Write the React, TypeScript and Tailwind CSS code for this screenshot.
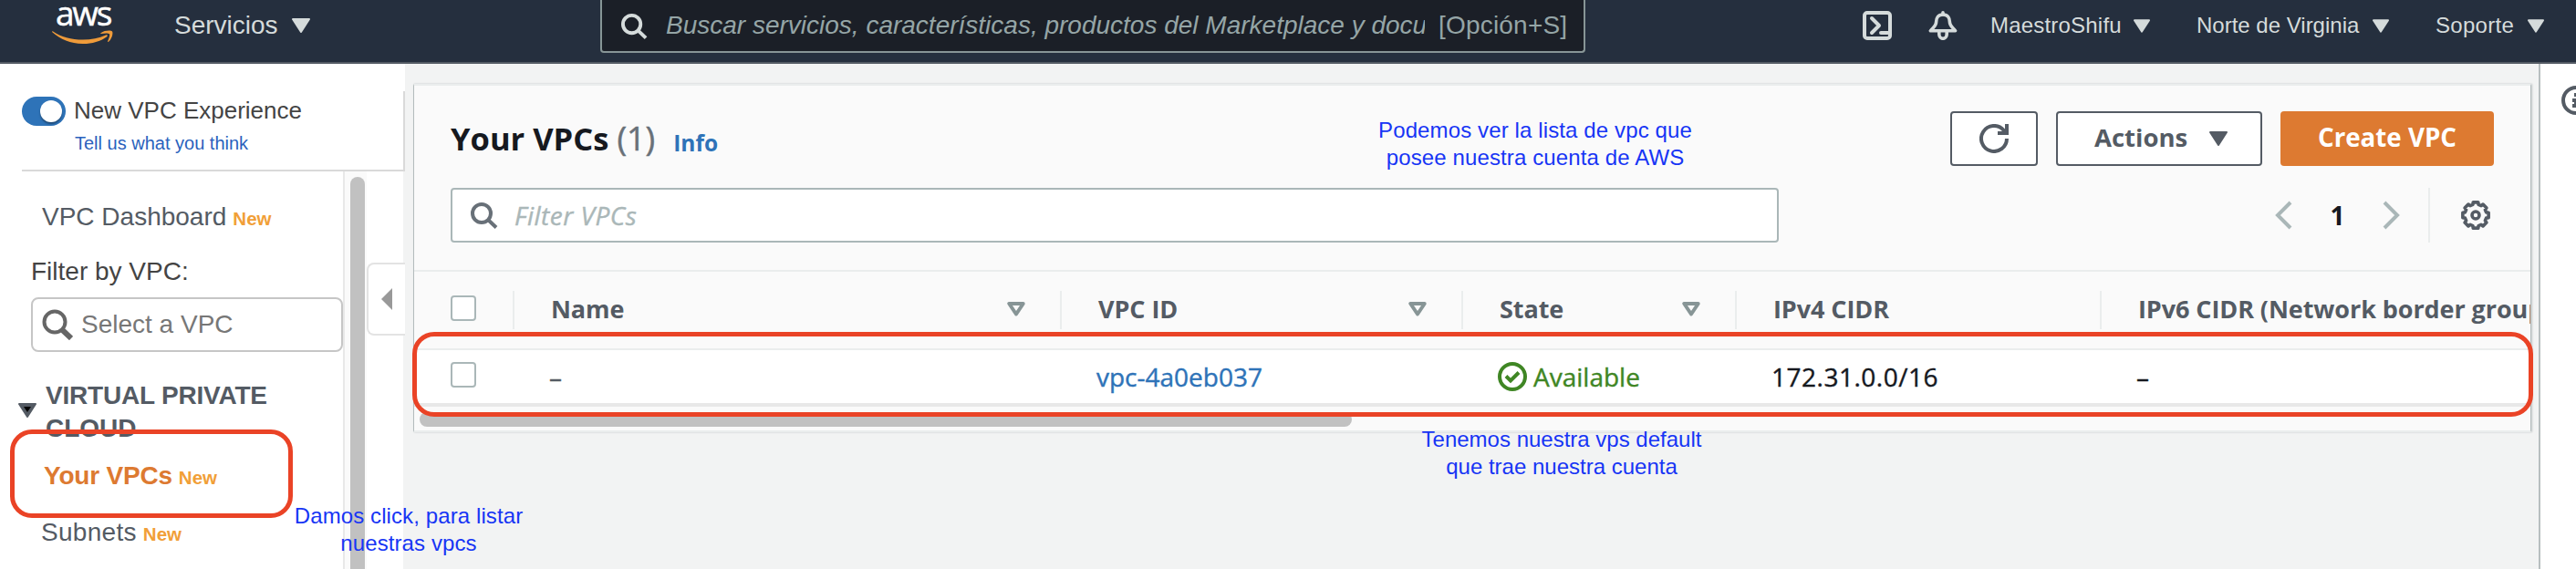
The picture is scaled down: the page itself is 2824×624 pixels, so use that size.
import React from "react";

const ember = "font-['Open_Sans','Noto_Sans',sans-serif]";

function Caret({ className = "" }: { className?: string }) {
  return (
    <svg viewBox="0 0 20 16" className={className} fill="currentColor" stroke="currentColor" strokeWidth="2" strokeLinejoin="round">
      <path d="M1 1H19L10 15Z" />
    </svg>
  );
}

function SearchIcon({ className = "" }: { className?: string }) {
  return (
    <svg viewBox="0 0 32 30" className={className} fill="none" stroke="currentColor" strokeWidth="4">
      <circle cx="13" cy="13" r="10" />
      <path d="M19.5 19.5L29 28.5" />
    </svg>
  );
}

function AwsLogo() {
  return (
    <div className="flex h-[56px] w-[68px] flex-col items-center">
      <div className={`${ember} h-[33px] whitespace-nowrap text-[37px] leading-[28px] tracking-[-2.300px] text-white [-webkit-text-stroke:0.500px]`}>aws</div>
      <svg viewBox="0 0 68 16" className="h-[16px] w-[68px] shrink-0" fill="#ef9b3a">
        <path d="M0.8 1.2C10 7.5 21 10.6 34 10.6C43 10.600 51.500 8.800 59 5.400C60.500 4.800 61.400 6.200 60.200 7.200C53 12.500 43 15.200 33.500 15C20.500 15 9 10.300 0.300 2.300C-0.200 1.700 0.200 0.900 0.800 1.200Z" />
        <path d="M53.500 3.200C57.500 0.200 64.500 0 66 1.400C67.500 3.500 65 10.500 62 12.800C61.300 13.300 60.800 12.900 61.100 12.200C62.500 8.800 63.700 5.500 63 4.300C62 3 57.500 3.300 54 3.900C53.200 4 53 3.500 53.500 3.200Z" />
      </svg>
    </div>
  );
}

function Header() {
  return (
    <header className="flex h-[70px] shrink-0 items-start border-b-2 border-[#545b64] bg-[#252f3e] text-[#d5dbdb]">
      <div className="ml-[57px]">
        <AwsLogo />
      </div>
      <div className="ml-[66px] flex h-[56px] w-[149px] items-center justify-between text-[28px]">
        <span>Servicios</span>
        <Caret className="h-[16px] w-[20px]" />
      </div>
      <div className="ml-[318px] h-[58px] w-[1080px] rounded-b-[4px] border-x-2 border-b-2 border-[#879596] bg-[#1b1f27] text-[28px] text-[#95a5a6]">
        <div className="flex h-[56px] items-center">
          <SearchIcon className="ml-[20px] h-[29px] w-[31px] shrink-0 text-[#d5dbdb]" />
          <span className="ml-[19px] w-[832px] shrink-0 overflow-hidden whitespace-nowrap italic">
            Buscar servicios, características, productos del Marketplace y documentos
          </span>
          <span className="ml-[15px] whitespace-nowrap tracking-[0.2px]">[Opción+S]</span>
        </div>
      </div>
      <div className="ml-[304px] flex h-[56px] items-center text-[24px]">
        <svg viewBox="0 0 32 32" className="h-[32px] w-[32px]" fill="none" stroke="currentColor" strokeWidth="4" strokeLinecap="round" strokeLinejoin="round">
          <rect x="2" y="2" width="28" height="28" rx="3" />
          <path d="M10 8L18 16L10 24" />
          <path d="M20 24H28" />
        </svg>
        <svg viewBox="0 0 32 32" className="ml-[40px] h-[32px] w-[32px]" fill="none" stroke="currentColor" strokeWidth="3.600" strokeLinecap="round" strokeLinejoin="round">
          <path d="M16 1.800V4" />
          <path d="M16 4C10.500 4 8.600 8 8.600 12C8.600 16.500 5 18.500 2.400 21.800H29.600C27 18.500 23.400 16.500 23.400 12C23.400 8 21.500 4 16 4Z" />
          <path d="M11.800 23V25.500A4.200 4.800 0 0 0 20.200 25.500V23" />
        </svg>
        <span className="ml-[36px] w-[157px] whitespace-nowrap tracking-[0.2px]">MaestroShifu</span>
        <Caret className="h-[15px] w-[18px]" />
        <span className="ml-[51px] w-[193px] whitespace-nowrap">Norte de Virginia</span>
        <Caret className="h-[15px] w-[18px]" />
        <span className="ml-[51px] w-[101px] whitespace-nowrap tracking-[0.300px]">Soporte</span>
        <Caret className="h-[15px] w-[18px]" />
      </div>
    </header>
  );
}

function New() {
  return <span className="ml-[7px] text-[20.500px] font-bold text-[#f19f38]">New</span>;
}

function Sidebar() {
  return (
    <aside className="flex w-[444px] shrink-0 flex-col">
      <div className="bg-white pt-[30px]">
        <div className="h-[88px] border-r-2 border-[#d9d9d9] pl-[24px]">
          <div className="h-[88px] border-b-2 border-[#d9d9d9] pt-[6px]">
            <div className="flex h-[32px] items-center">
              <div className="flex h-[32px] w-[48px] items-center justify-end rounded-full bg-[#2e73b8] pr-[4px]">
                <div className="h-[24px] w-[24px] rounded-full bg-white shadow-[0_2px_2px_rgba(0,0,0,0.350)]" />
              </div>
              <span className="ml-[9px] pb-[2px] text-[26px] leading-[32px] text-[#444]">New VPC Experience</span>
            </div>
            <div className="mt-[4px] pl-[58px] text-[20px] leading-[30px] text-[#2a62bd]">Tell us what you think</div>
          </div>
        </div>
      </div>
      <div className="flex flex-1">
        <nav className="w-[378px] shrink-0 border-r-2 border-[#e8e8e8] bg-white pt-[30px] text-[28px] leading-[40px] whitespace-nowrap text-[#545b64]">
          <div className="h-[40px] pl-[46px]">VPC Dashboard<New /></div>
          <div className="mt-[20px] h-[40px] pl-[34px] text-[#444]">Filter by VPC:</div>
          <div className="mt-[8px] ml-[34px] flex h-[60px] w-[342px] items-center rounded-[8px] border-2 border-[#c6c6c6] pl-[10px] text-[#777]">
            <svg viewBox="0 0 34 34" className="h-[34px] w-[34px]" fill="none" stroke="#666">
              <circle cx="14" cy="14" r="11.500" strokeWidth="4" />
              <path d="M22 22.500L32 32" strokeWidth="6" />
            </svg>
            <span className="ml-[9px] pb-[1px]">Select a VPC</span>
          </div>
          <div className="mt-[30px] flex pl-[20px] leading-[36px] font-bold">
            <svg viewBox="0 0 20 16" className="mt-[26px] h-[16px] w-[20px]">
              <path d="M1 1H19L10 15Z" fill="#545b64" stroke="#545b64" strokeWidth="2" strokeLinejoin="round" />
              <path d="M6 4H14L10 10Z" fill="#000" />
            </svg>
            <div className="ml-[10px]">
              <div className="tracking-[-0.200px]">VIRTUAL PRIVATE</div>
              <div>CLOUD</div>
            </div>
          </div>
          <div className="mt-[14px] h-[40px] pl-[48px]">
            <span className="font-bold tracking-[-0.200px] text-[#dd7a31]">Your VPCs</span>
            <New />
          </div>
          <div className="mt-[22px] h-[40px] pl-[45px]">
            <span className="tracking-[0.300px]">Subnets</span>
            <New />
          </div>
        </nav>
        <div className="flex w-[24px] shrink-0 bg-[#fafafa] pt-[6px] pl-[6px]">
          <div className="w-[16px] rounded-t-full bg-[#c1c1c1]" />
        </div>
        <div className="w-[40px] shrink-0 bg-white pt-[100px]">
          <div className="flex h-[80px] w-[42px] items-center rounded-l-[8px] border-y-2 border-l-2 border-[#e3e3e3] bg-white pl-[14px]">
            <svg viewBox="0 0 12 24" className="h-[24px] w-[12px]" fill="#999">
              <path d="M12 0V24L0 12Z" />
            </svg>
          </div>
        </div>
      </div>
    </aside>
  );
}

function Gear() {
  const pts: string[] = [];
  for (let i = 0; i < 8; i++) {
    for (const [o, r] of [[-11, 14.4], [11, 14.4], [15, 12], [30, 12]]) {
      const a = ((i * 45 + o - 90) * Math.PI) / 180;
      pts.push(`${(16 + r * Math.cos(a)).toFixed(2)},${(16 + r * Math.sin(a)).toFixed(2)}`);
    }
  }
  return (
    <svg viewBox="0 0 32 32" className="h-[32px] w-[32px]" fill="none" stroke="#545b64" strokeWidth="3.600" strokeLinejoin="round">
      <polygon points={pts.join(" ")} />
      <circle cx="16" cy="16" r="4" />
    </svg>
  );
}

function Checkbox() {
  return <div className="mb-[4px] h-[28px] w-[28px] rounded-[4px] border-2 border-[#aab7b8] bg-white" />;
}

function HeadCell({ label, width, sort, last }: { label: string; width: string; sort?: boolean; last?: boolean }) {
  return (
    <div className={`flex h-[42px] shrink-0 items-center justify-between pr-[38px] pl-[40px] ${width} ${last ? "" : "border-r-2 border-[#eaeded]"}`}>
      <span className="pb-[2px] tracking-[-0.080px] whitespace-nowrap">{label}</span>
      {sort && (
        <svg viewBox="0 0 20 16" className="mb-[2px] h-[16px] w-[20px]" fill="none" stroke="#879596" strokeWidth="4" strokeLinejoin="round">
          <path d="M2.300 2H17.700L10 13.500Z" />
        </svg>
      )}
    </div>
  );
}

function Panel() {
  return (
    <section className={`${ember} mt-[22px] ml-[9px] h-[382px] w-[2322px] overflow-hidden border-x border-t-2 border-b-2 border-x-[#b4bcbd] border-y-[#eaeded] bg-[#fafafa] shadow-[1px_0_2px_rgba(0,28,36,0.200)]`}>
      <div className="mx-[40px] mt-[28px] flex h-[60px] items-center">
        <h2 className="text-[34.500px] font-bold whitespace-nowrap text-[#16191f]">Your VPCs</h2>
        <span className="ml-[9px] text-[36px] text-[#687078] [-webkit-text-stroke:0.500px]">(1)</span>
        <span className="mt-[10px] ml-[20px] text-[24.500px] font-bold text-[#2e73b8]">Info</span>
        <div className="ml-auto flex gap-[20px] text-[28px] font-bold">
          <button className="flex h-[60px] w-[96px] items-center justify-center rounded-[4px] border-2 border-[#545b64] bg-white">
            <svg viewBox="0 0 32 32" className="h-[32px] w-[32px]" fill="none" stroke="#545b64" strokeWidth="4">
              <path d="M30 16A14 14 0 1 1 26.500 6.700L29 9.500" />
              <path d="M30 0V10H20" />
            </svg>
          </button>
          <button className="flex h-[60px] w-[226px] items-center rounded-[4px] border-2 border-[#545b64] bg-white pl-[40px] text-[#545b64]">
            <span className="w-[126px] pb-[2px] text-left text-[27.500px]">Actions</span>
            <Caret className="h-[16px] w-[20px]" />
          </button>
          <button className="h-[60px] w-[234px] rounded-[4px] bg-[#dd7a31] pb-[2px] text-[27.700px] text-white">Create VPC</button>
        </div>
      </div>
      <div className="mx-[40px] mt-[24px] flex h-[60px] items-center">
        <div className="flex h-[60px] w-[1456px] items-center rounded-[4px] border-2 border-[#aab7b8] bg-white">
          <SearchIcon className="ml-[19px] h-[30px] w-[32px] text-[#687078]" />
          <span className="ml-[17px] text-[28px] tracking-[0.500px] text-[#aab7b8] italic [-webkit-text-stroke:0.400px]">Filter VPCs</span>
        </div>
        <div className="ml-auto flex h-[60px] items-center">
          <svg viewBox="0 0 20 32" className="h-[32px] w-[20px]" fill="none" stroke="#aab7b8" strokeWidth="4">
            <path d="M18 2L4 16L18 30" />
          </svg>
          <span className="w-[99px] text-center text-[28px] font-bold text-[#16191f]">1</span>
          <svg viewBox="0 0 20 32" className="h-[32px] w-[20px]" fill="none" stroke="#aab7b8" strokeWidth="4">
            <path d="M2 2L16 16L2 30" />
          </svg>
          <div className="mr-[34px] ml-[30px] h-[60px] w-[2px] bg-[#eaeded]" />
          <div className="mr-[4px]">
            <Gear />
          </div>
        </div>
      </div>
      <div className="mt-[30px] flex h-[86px] items-center border-t-2 border-[#eaeded] text-[27px] font-bold text-[#545b64]">
        <div className="flex h-[42px] w-[110px] shrink-0 items-center border-r-2 border-[#eaeded] pl-[40px]">
          <Checkbox />
        </div>
        <HeadCell label="Name" width="w-[600px]" sort />
        <HeadCell label="VPC ID" width="w-[440px]" sort />
        <HeadCell label="State" width="w-[300px]" sort />
        <HeadCell label="IPv4 CIDR" width="w-[400px]" />
        <HeadCell label="IPv6 CIDR (Network border group)" width="w-[600px]" last />
      </div>
      <div className="flex h-[64px] items-center border-t-2 border-b-4 border-t-[#eaeded] border-b-[#e8e8e8] bg-white text-[28px] whitespace-nowrap text-[#16191f] [-webkit-text-stroke:0.400px]">
        <div className="w-[148px] shrink-0 pl-[40px]">
          <Checkbox />
        </div>
        <div className="w-[600px] shrink-0 text-[#545b64]">–</div>
        <div className="w-[440px] shrink-0 text-[#2e73b8]">vpc-4a0eb037</div>
        <div className="flex w-[300px] shrink-0 items-center text-[#3f8624]">
          <svg viewBox="0 0 32 32" className="h-[32px] w-[32px]" fill="none" stroke="currentColor" strokeWidth="4">
            <circle cx="16" cy="16" r="14" />
            <path d="M9 15.500L14 20.500L23 11.500" />
          </svg>
          <span className="ml-[7px]">Available</span>
        </div>
        <div className="w-[400px] shrink-0 tracking-[0.500px]">172.31.0.0/16</div>
        <div className="shrink-0">–</div>
      </div>
      <div className="h-[26px] pt-[6px] pl-[6px]">
        <div className="h-[16px] w-[1022px] rounded-full bg-[#c1c1c1]" />
      </div>
    </section>
  );
}

function Note({ lines, className }: { lines: string[]; className: string }) {
  return (
    <div className={`absolute text-center text-[24px] leading-[30px] whitespace-nowrap text-[#1735f5] ${className}`}>
      {lines.map((l) => (
        <div key={l}>{l}</div>
      ))}
    </div>
  );
}

export default function App() {
  return (
    <div className="relative flex h-[624px] w-[2824px] flex-col overflow-hidden bg-[#f2f3f3] font-['Liberation_Sans',Arial,sans-serif]">
      <Header />
      <div className="flex flex-1">
        <Sidebar />
        <main className="flex-1">
          <Panel />
        </main>
        <div className="w-[41px] shrink-0 overflow-hidden border-l-2 border-[#b8bfc0] bg-white pt-[24px] pl-[23px]">
          <svg viewBox="0 0 32 32" className="h-[32px] w-[32px]" fill="none" stroke="#545b64" strokeWidth="4">
            <circle cx="16" cy="16" r="14" />
            <path d="M14 10H18M12 16H18M16 14V22M12 22H20" />
          </svg>
        </div>
      </div>

      <div className="absolute top-[471px] left-[11px] h-[97px] w-[310px] rounded-[24px] border-[5px] border-[#ea4326]" />
      <div className="absolute top-[364px] left-[452px] h-[93px] w-[2325px] rounded-[24px] border-[5px] border-[#ea4326]" />

      <Note className="top-[128px] left-[1511px] w-[344px] tracking-[0.120px]" lines={["Podemos ver la lista de vpc que", "posee nuestra cuenta de AWS"]} />
      <Note className="top-[467px] left-[1554px] w-[316px]" lines={["Tenemos nuestra vps default", "que trae nuestra cuenta"]} />
      <Note className="top-[551px] left-[318px] w-[260px] tracking-[0.100px]" lines={["Damos click, para listar", "nuestras vpcs"]} />
    </div>
  );
}
